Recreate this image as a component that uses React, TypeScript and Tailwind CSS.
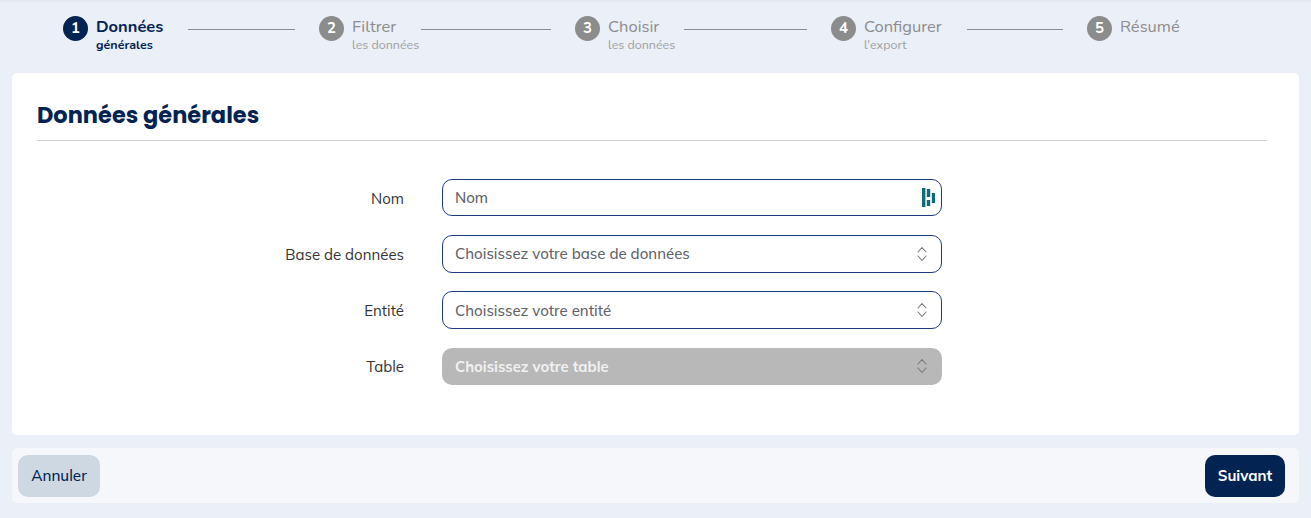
const steps = [
  { n: 1, title: 'Données', sub: 'générales', active: true },
  { n: 2, title: 'Filtrer', sub: 'les données' },
  { n: 3, title: 'Choisir', sub: 'les données' },
  { n: 4, title: 'Configurer', sub: "l'export" },
  { n: 5, title: 'Résumé', sub: '' },
];

function Chevrons({ className }: { className: string }) {
  return (
    <svg viewBox="0 0 12 16" className={className} fill="none" stroke="currentColor" strokeWidth="1.1" strokeLinecap="round" strokeLinejoin="round">
      <path d="M2 6l4-4.5 4 4.5" />
      <path d="M2 10l4 4.5 4-4.5" />
    </svg>
  );
}

function Logo() {
  return (
    <svg viewBox="0 0 13 19" className="h-[19px] w-[13px]" fill="#0f6b78">
      <rect x="0" y="0" width="3.4" height="19" />
      <rect x="4.8" y="1" width="3.4" height="8" />
      <rect x="4.8" y="12" width="3.4" height="6" />
      <rect x="9.8" y="5" width="3.2" height="10" />
    </svg>
  );
}

function Field({ label, children }: { label: string; children: React.ReactNode }) {
  return (
    <div className="flex items-center">
      <label className="w-[367px] pt-[3px] text-right text-[15px] text-[#333333]">{label}</label>
      <div className="ml-[38px] w-[500px]">{children}</div>
    </div>
  );
}

function Select({ text, disabled }: { text: string; disabled?: boolean }) {
  return (
    <div
      className={
        disabled
          ? 'flex h-[37px] items-center justify-between rounded-[10px] bg-[#b8b8b8] pl-[13px] pr-[14px] text-[14.8px] font-bold text-[#f1f1f1]'
          : 'flex h-[38px] items-center justify-between rounded-[10px] border border-[#1c3a80] bg-white pl-[12px] pr-[13px] text-[15px] font-medium text-[#5f6368]'
      }
    >
      <span className="pt-[2px]">{text}</span>
      <Chevrons className="h-[16px] w-[12px] text-[#777777]" />
    </div>
  );
}

export default function App() {
  return (
    <div className="flex h-[518px] flex-col bg-[#ebeff7] font-['Muli','Mulish','Nunito',sans-serif] shadow-[inset_0_3px_3px_-2px_rgba(0,0,0,0.06)]">
      <div className="flex h-[73px] pl-[63px] pt-[16px] font-['Nunito',sans-serif]">
        {steps.map((s) => (
          <div key={s.n} className="flex w-[256px] shrink-0">
            <div
              className={
                s.active
                  ? 'flex h-[25px] w-[25px] shrink-0 items-center justify-center rounded-full bg-[#032352] text-[15px] font-bold text-white'
                  : 'flex h-[25px] w-[25px] shrink-0 items-center justify-center rounded-full bg-[#8c8c8c] text-[15px] font-bold text-white'
              }
            >
              {s.n}
            </div>
            <div className="ml-[8px] flex-1">
              <div className="flex items-center">
                <div className={s.active ? 'shrink-0 text-[16.5px] leading-[21px] font-bold text-[#032352]' : 'shrink-0 text-[16.5px] leading-[21px] text-[#8c8c8c]'}>{s.title}</div>
                {s.n < 5 && <div className="ml-[25px] mr-[24px] mt-[5px] h-px flex-1 bg-[#8c8c8c]" />}
              </div>
              <div className={s.active ? 'text-[12.5px] leading-[16px] font-bold text-[#032352]' : 'text-[12.5px] leading-[16px] text-[#a0a0a0]'}>{s.sub}</div>
            </div>
          </div>
        ))}
      </div>

      <div className="mx-[12px] h-[362px] rounded-[5px] bg-white pl-[25px] pr-[32px]">
        <div className="flex h-[68px] items-end border-b border-[#cfcfcf] pb-[10px]">
          <h1 className="font-['Poppins','Inter',sans-serif] text-[22.5px] leading-[30px] font-bold text-[#032352]">Données générales</h1>
        </div>
        <div className="mt-[38px] flex flex-col gap-[18.5px]">
          <Field label="Nom">
            <div className="flex h-[37px] items-center justify-between rounded-[10px] border border-[#1c3a80] bg-white pl-[12px] pr-[6px] text-[15px] font-medium text-[#5f6368]">
              <span className="pt-[2px]">Nom</span>
              <Logo />
            </div>
          </Field>
          <Field label="Base de données">
            <Select text="Choisissez votre base de données" />
          </Field>
          <Field label="Entité">
            <Select text="Choisissez votre entité" />
          </Field>
          <Field label="Table">
            <Select text="Choisissez votre table" disabled />
          </Field>
        </div>
      </div>

      <div className="mx-[12px] mt-[13px] flex h-[55px] items-center justify-between rounded-[5px] bg-[#f5f7fb] pl-[6px] pr-[14px]">
        <button className="h-[42px] w-[82px] rounded-[10px] bg-[#cdd8e3] pt-px text-[15.2px] font-medium text-[#032352]">Annuler</button>
        <button className="h-[42px] w-[80px] rounded-[10px] bg-[#032352] pt-px text-[15px] font-bold text-white">Suivant</button>
      </div>
    </div>
  );
}
